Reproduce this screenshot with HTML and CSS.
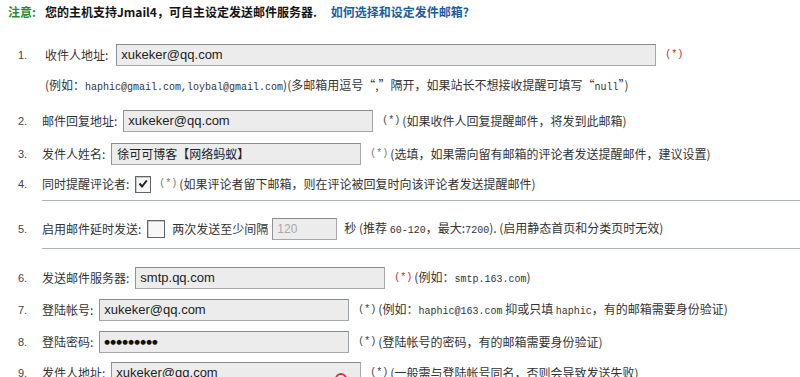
FILE: index.html
```html
<!DOCTYPE html>
<html lang="zh-CN">
<head>
<meta charset="utf-8">
<title>邮件设置</title>
<link rel="stylesheet" href="styles.css">
</head>
<body>
<div class="page">
  <div class="notice">
    <span class="g">注意:</span>
    <span class="msg">您的主机支持Jmail4，可自主设定发送邮件服务器.</span>
    <a class="link" href="#">如何选择和设定发件邮箱?</a>
  </div>

  <div class="row r1">
    <span class="num">1.</span>
    <span class="label l1">收件人地址:</span>
    <span class="field wide">xukeker@qq.com</span>
    <span class="req red">(*)</span>
  </div>
  <div class="note n1">(例如：<span class="en">haphic@gmail.com,loybal@gmail.com</span>)(多邮箱用逗号“,”隔开，如果站长不想接收提醒可填写“<span class="en">null</span>”)</div>

  <div class="row r2">
    <span class="num">2.</span>
    <span class="label">邮件回复地址:</span>
    <span class="field">xukeker@qq.com</span>
    <span class="req">(*)</span>
    <span class="desc">(如果收件人回复提醒邮件，将发到此邮箱)</span>
  </div>

  <div class="row r3">
    <span class="num">3.</span>
    <span class="label">发件人姓名:</span>
    <span class="field cjk">徐可可博客【网络蚂蚁】</span>
    <span class="req light">(*)</span>
    <span class="desc">(选填，如果需向留有邮箱的评论者发送提醒邮件，建议设置)</span>
  </div>

  <div class="row r4">
    <span class="num">4.</span>
    <span class="label">同时提醒评论者:</span>
    <span class="check"><svg width="10" height="10" viewBox="0 0 10 10"><path d="M1.5 4.5 L4 7.5 L8.8 1.5" fill="none" stroke="#1e1e1e" stroke-width="2"/></svg></span>
    <span class="req light nomargin">(*)</span>
    <span class="desc">(如果评论者留下邮箱，则在评论被回复时向该评论者发送提醒邮件)</span>
  </div>

  <div class="sep s1"></div>

  <div class="row r5">
    <span class="num">5.</span>
    <span class="label">启用邮件延时发送:</span>
    <span class="check c5"></span>
    <span class="desc">两次发送至少间隔</span>
    <span class="field short">120</span>
    <span class="desc sec">秒 (推荐 <span class="en">60-120</span>，最大:<span class="en">7200</span>). (启用静态首页和分类页时无效)</span>
  </div>

  <div class="sep s2"></div>

  <div class="row r6">
    <span class="num">6.</span>
    <span class="label">发送邮件服务器:</span>
    <span class="field">smtp.qq.com</span>
    <span class="req red">(*)</span>
    <span class="desc">(例如：<span class="en">smtp.163.com</span>)</span>
  </div>

  <div class="row r7">
    <span class="num">7.</span>
    <span class="label">登陆帐号:</span>
    <span class="field">xukeker@qq.com</span>
    <span class="req">(*)</span>
    <span class="desc">(例如：<span class="en">haphic@163.com</span> 抑或只填 <span class="en">haphic</span>，有的邮箱需要身份验证)</span>
  </div>

  <div class="row r8">
    <span class="num">8.</span>
    <span class="label">登陆密码:</span>
    <span class="field"><span class="dots">●●●●●●●●●</span></span>
    <span class="req">(*)</span>
    <span class="desc">(登陆帐号的密码，有的邮箱需要身份验证)</span>
  </div>

  <div class="row r9">
    <span class="num">9.</span>
    <span class="label">发件人地址:</span>
    <span class="field">xukeker@qq.com</span>
    <span class="req">(*)</span>
    <span class="desc">(<span class="hl">一般需与登陆帐号同名</span>，否则会导致发送失败)</span>
    <span class="annot"></span>
  </div>
</div>
</body>
</html>
```

FILE: styles.css
```css
html, body {
  margin: 0;
  padding: 0;
  overflow: hidden;
  background: #ffffff;
}

body {
  font-family: "Noto Sans CJK SC", sans-serif;
  font-size: 12px;
  line-height: 16px;
  color: #333333;
}

.page {
  display: flex;
  flex-direction: column;
}

.notice {
  height: 24px;
  display: flex;
  align-items: center;
  padding-left: 8px;
  font-weight: bold;
  white-space: nowrap;
}

.notice .g {
  color: #2f8a2f;
}

.notice .msg {
  color: #141414;
  margin-left: 9px;
}

.notice .link {
  color: #1b5d9f;
  text-decoration: none;
  margin-left: 14px;
}

.row {
  position: relative;
  display: flex;
  align-items: center;
  height: 22px;
  white-space: nowrap;
}

.num {
  flex: 0 0 auto;
  width: 24px;
  padding-left: 18px;
  font-family: "Liberation Sans", sans-serif;
  font-size: 11px;
  color: #444444;
}

.label {
  margin-right: 6px;
}

.label.l1 {
  margin-left: 3px;
  margin-right: 8px;
}

.field {
  box-sizing: border-box;
  flex: 0 0 auto;
  width: 250px;
  height: 22px;
  padding: 0 4px;
  display: flex;
  align-items: center;
  border: 1px solid #a3a8ac;
  border-top-color: #858b90;
  border-left-color: #8d9397;
  background: #ececec;
  font-family: "Liberation Sans", "Noto Sans CJK SC", sans-serif;
  font-size: 13px;
  color: #222222;
}

.field.wide {
  width: 540px;
}

.field.cjk {
  font-family: "Noto Sans CJK SC", sans-serif;
  font-size: 12px;
  padding-left: 5px;
}

.field.short {
  width: 65px;
  margin-left: 4px;
  color: #a9a9a9;
  font-size: 12px;
}

.dots {
  font-family: "DejaVu Sans", sans-serif;
  font-size: 6.5px;
  letter-spacing: 0.3px;
  color: #111111;
}

.req {
  font-family: "Liberation Mono", monospace;
  font-size: 10px;
  margin-left: 9px;
  margin-right: 2px;
  color: #444444;
}

.req.red {
  color: #c22b25;
}

.req.light {
  color: #777777;
}

.req.nomargin {
  margin-left: 0;
}

.en {
  font-family: "Liberation Mono", monospace;
  font-size: 10px;
}

.check {
  box-sizing: border-box;
  flex: 0 0 auto;
  width: 16px;
  height: 17px;
  margin-right: 8px;
  display: flex;
  align-items: center;
  justify-content: center;
  border: 1px solid #5f6569;
  background: #f7f7f7;
  box-shadow: inset 1px 1px 0 #c9c9c9;
}

.check.c5 {
  width: 18px;
  height: 18px;
  margin-left: 0;
  margin-right: 7px;
}

.desc.sec {
  margin-left: 7px;
}

.note {
  height: 16px;
  margin-top: 11px;
  padding-left: 45px;
  white-space: nowrap;
}

.sep {
  height: 0;
  margin-left: 42px;
  border-top: 1px solid #aab3ba;
}

.r1 { margin-top: 20px; }
.r2 { margin-top: 17px; }
.r3 { margin-top: 11px; }
.r4 { margin-top: 8px; }
.s1 { margin-top: 5px; }
.r5 { margin-top: 17px; }
.s2 { margin-top: 8px; }
.r6 { margin-top: 18px; }
.r7 { margin-top: 10px; }
.r8 { margin-top: 10px; }
.r9 { margin-top: 9px; }

.hl {
  text-decoration: underline;
  text-decoration-color: #d42a22;
  text-decoration-thickness: 2px;
  text-underline-offset: -1px;
}

.annot {
  position: absolute;
  left: 335px;
  top: 11px;
  width: 8px;
  height: 8px;
  border: 2px solid #d8352c;
  border-radius: 50%;
}
```
